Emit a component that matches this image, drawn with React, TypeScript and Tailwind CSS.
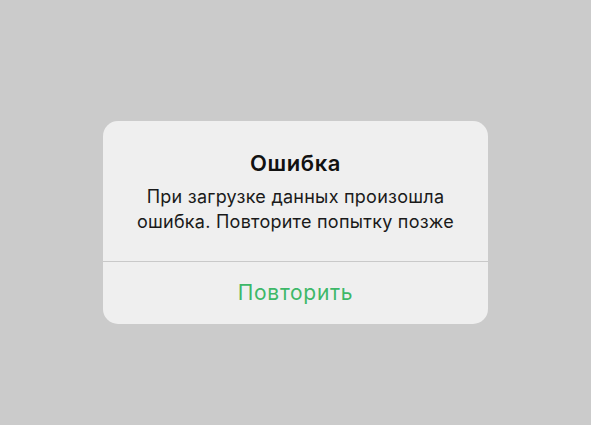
import React from "react";

const ErrorAlert = ({ onRetry }: { onRetry?: () => void }) => {
  return (
    <div className="w-[385px] rounded-[15px] bg-[#efefef] overflow-hidden">
      <div className="flex flex-col items-center px-6 pt-[29px] pb-[27px] text-center">
        <h2 className="text-[22px] leading-[27px] font-semibold tracking-[0.6px] text-[#111]">Ошибка</h2>
        <p className="mt-[7px] text-[18px] leading-[25px] tracking-[0.25px] text-[#1a1a1a]">
          При загрузке данных произошла
          <br />
          ошибка. Повторите попытку позже
        </p>
      </div>
      <div className="h-px bg-[#c9c9c9]" />
      <button
        type="button"
        onClick={onRetry}
        className="flex h-[62px] w-full items-center justify-center text-[21px] tracking-[0.7px] text-[#3db868]"
      >
        Повторить
      </button>
    </div>
  );
};

export default function App() {
  return (
    <div
      className="flex min-h-[425px] items-start justify-center bg-[#cbcbcb] pt-[121px]"
      style={{ fontFamily: "Inter, 'Noto Sans', sans-serif" }}
    >
      <ErrorAlert />
    </div>
  );
}
